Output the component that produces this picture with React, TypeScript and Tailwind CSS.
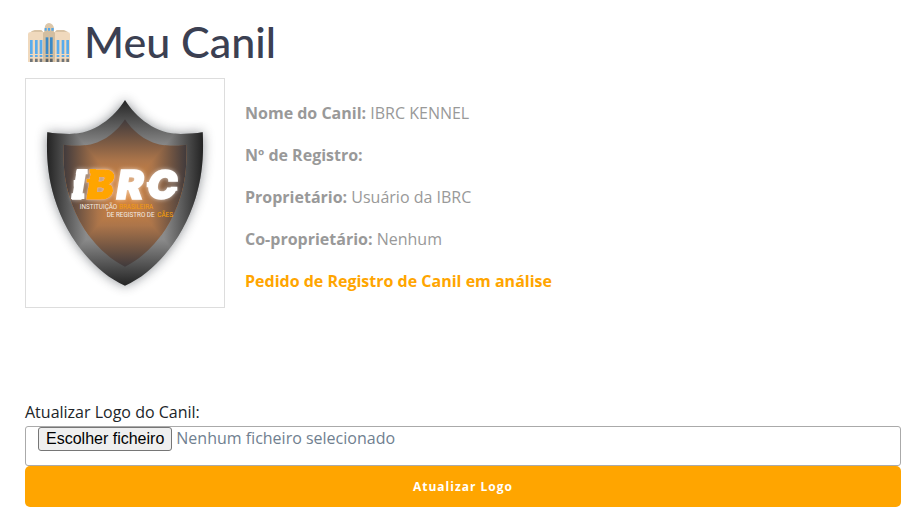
import { useRef, useState } from "react";

function BuildingIcon() {
  const windows = [18, 33, 47, 98, 113, 127];
  return (
    <svg viewBox="12 15 126 117" className="h-[39px] w-[42px] shrink-0" aria-hidden="true">
      <path d="M22 40 L32 36 H52 L58 42 V50 H20Z M92 42 L98 36 H120 L132 42 V50 H92Z" fill="#d9c3a5" />
      <path d="M12 48 Q12 42 20 42 H60 V132 H12Z M90 42 H130 Q138 42 138 48 V132 H90Z" fill="#f0d9bd" />
      <path d="M62 30 Q63 16 75 15 Q87 16 90 30 V40 H60Z" fill="#dcc7aa" />
      <path d="M57 45 L63 38 H88 L93 45 V132 H57Z" fill="#d3bea0" />
      <path d="M62 30h6v8h-6z M72 30h6v8h-6z M82 30h7v8h-7z" fill="#55a7e6" />
      {windows.map((x) => (
        <g key={x}>
          <rect x={x} y="66" width="8" height="42" fill="#5aacec" />
          <rect x={x} y="111" width="8" height="6" fill="#5aacec" />
          <rect x={x} y="122" width="8" height="10" fill="#707579" />
        </g>
      ))}
      {[65, 78].map((x) => (
        <g key={x}>
          <rect x={x} y="58" width="8" height="50" fill="#3c89c5" />
          <rect x={x} y="111" width="8" height="6" fill="#3c89c5" />
          <rect x={x} y="122" width="8" height="10" fill="#5d6265" />
        </g>
      ))}
    </svg>
  );
}

const OUTER =
  "M315 84 C282 137 222 186 148 186 C122 186 101 185 82 181 C78 250 84 316 103 377 C139 493 218 598 315 641 C412 598 491 493 527 377 C546 316 552 250 548 181 C529 185 508 186 482 186 C408 186 348 137 315 84Z";
const INNER =
  "M315 142 C286 186 238 221 180 221 C162 221 146 221 131 218 C129 275 133 322 147 369 C174 463 238 546 315 584 C392 546 456 463 483 369 C497 322 501 275 499 218 C484 221 468 221 450 221 C392 221 344 186 315 142Z";

function ShieldLogo() {
  return (
    <svg viewBox="18 21 594 684" className="block h-full w-full" role="img" aria-label="Logo IBRC">
      <defs>
        <linearGradient id="steelV" gradientUnits="userSpaceOnUse" x1="0" y1="84" x2="0" y2="641">
          <stop offset="0" stopColor="#242424" />
          <stop offset="0.25" stopColor="#8b8b8b" />
          <stop offset="0.75" stopColor="#8b8b8b" />
          <stop offset="1" stopColor="#242424" />
        </linearGradient>
        <linearGradient id="steelH" gradientUnits="userSpaceOnUse" x1="82" y1="0" x2="548" y2="0">
          <stop offset="0" stopColor="#242424" />
          <stop offset="0.25" stopColor="#8b8b8b" />
          <stop offset="0.75" stopColor="#8b8b8b" />
          <stop offset="1" stopColor="#242424" />
        </linearGradient>
        <linearGradient id="copperV" gradientUnits="userSpaceOnUse" x1="0" y1="142" x2="0" y2="584">
          <stop offset="0" stopColor="#403a3c" />
          <stop offset="0.28" stopColor="#ac754a" />
          <stop offset="0.5" stopColor="#e08a3c" />
          <stop offset="0.72" stopColor="#ac754a" />
          <stop offset="1" stopColor="#403a3c" />
        </linearGradient>
        <linearGradient id="copperH" gradientUnits="userSpaceOnUse" x1="130" y1="0" x2="500" y2="0">
          <stop offset="0" stopColor="#403a3c" />
          <stop offset="0.28" stopColor="#ac754a" />
          <stop offset="0.5" stopColor="#e08a3c" />
          <stop offset="0.72" stopColor="#ac754a" />
          <stop offset="1" stopColor="#403a3c" />
        </linearGradient>
        <clipPath id="outerClip">
          <path d={OUTER} />
        </clipPath>
        <clipPath id="innerClip">
          <path d={INNER} />
        </clipPath>
        <filter id="shadow" x="-20%" y="-20%" width="140%" height="140%">
          <feGaussianBlur stdDeviation="18" />
        </filter>
        <filter id="glow" x="-20%" y="-40%" width="140%" height="180%">
          <feDropShadow dx="0" dy="0" stdDeviation="6" floodColor="#ffffff" floodOpacity="0.6" />
        </filter>
      </defs>
      <path d={OUTER} fill="#50545c" opacity="0.65" filter="url(#shadow)" />
      <path d={OUTER} fill="url(#steelV)" />
      <path d="M60 58 L315 362 L60 668Z M570 58 L315 362 L570 668Z" fill="url(#steelH)" clipPath="url(#outerClip)" />
      <path d={INNER} fill="url(#copperV)" />
      <path d="M112 120 L315 363 L112 606Z M518 120 L315 363 L518 606Z" fill="url(#copperH)" clipPath="url(#innerClip)" />
      <g filter="url(#glow)">
        <path
          d="M171 291h32v16h-36z M161 324h14v20h-14z M155 364h38v17h-40z M294 342h16v14h-16z M380 330h16v16h-16z M452 344h20v12h-20z"
          fill="#ffffff"
        />
        <path d="M208 291h20v14h-20z M199 320h24v12h-24z M204 350h18v12h-18z" fill="#ffa500" />
        <text
          y="380"
          fontSize="120"
          fontWeight="900"
          fontStyle="italic"
          fill="#ffffff"
          stroke="#ffffff"
          strokeWidth="5"
          className="font-['Inter',sans-serif]"
        >
          <tspan x="158">I</tspan>
          <tspan x="201" fill="#ffa500" stroke="#ffa500">B</tspan>
          <tspan x="290">R</tspan>
          <tspan x="382">C</tspan>
        </text>
      </g>
      <g fontSize="19" fill="#f2ebe4" className="font-['Roboto',sans-serif]">
        <text x="179" y="411">INSTITUIÇÃO</text>
        <text x="297" y="411" fill="#f39c12">BRASILEIRA</text>
        <text x="260" y="434">DE REGISTRO DE</text>
        <text x="412" y="434" fill="#ffa500">CÃES</text>
      </g>
    </svg>
  );
}

const details = [
  { label: "Nome do Canil:", value: "IBRC KENNEL" },
  { label: "Nº de Registro:", value: "" },
  { label: "Proprietário:", value: "Usuário da IBRC" },
  { label: "Co-proprietário:", value: "Nenhum" },
];

export default function App() {
  const fileRef = useRef<HTMLInputElement>(null);
  const [fileName, setFileName] = useState("Nenhum ficheiro selecionado");

  return (
    <main className="bg-white pt-4 pr-[22px] pb-4 pl-[25px] font-['Open_Sans',sans-serif] text-base text-[#212529]">
      <h1 className="flex h-[52px] items-center gap-[14px] pl-[3px] font-['Lato',sans-serif] text-[43px] font-medium text-[#3b4052]">
        <BuildingIcon />
        Meu Canil
      </h1>

      <section className="mt-[10px] flex gap-5">
        <div className="h-[230px] w-[200px] shrink-0 border border-[#dddddd]">
          <ShieldLogo />
        </div>
        <div className="flex flex-col gap-4 pt-[22px] leading-[26px] text-[#999999]">
          {details.map((d) => (
            <p key={d.label}>
              <strong className="font-bold">{d.label}</strong> {d.value}
            </p>
          ))}
          <p className="font-bold text-[#ffa500]">Pedido de Registro de Canil em análise</p>
        </div>
      </section>

      <form className="mt-[90px]" onSubmit={(e) => e.preventDefault()}>
        <label htmlFor="logo" className="block leading-7">
          Atualizar Logo do Canil:
        </label>
        <div className="flex h-10 items-start gap-1 rounded-[3px] border border-[#aaaaaa] px-3 text-[#708090]">
          <input
            ref={fileRef}
            id="logo"
            type="file"
            accept="image/*"
            className="sr-only"
            onChange={(e) => setFileName(e.target.files?.[0]?.name ?? "Nenhum ficheiro selecionado")}
          />
          <button
            type="button"
            onClick={() => fileRef.current?.click()}
            className="h-6 rounded-[3px] border border-[#767676] bg-[#efefef] px-[7px] font-['Liberation_Sans',Arial,sans-serif] leading-[22px] text-black"
          >
            Escolher ficheiro
          </button>
          <span className="leading-[22px]">{fileName}</span>
        </div>
        <button
          type="submit"
          className="block h-[41px] w-full rounded-[5px] bg-[#ffa500] text-xs font-bold tracking-[1px] text-white"
        >
          Atualizar Logo
        </button>
      </form>
    </main>
  );
}
